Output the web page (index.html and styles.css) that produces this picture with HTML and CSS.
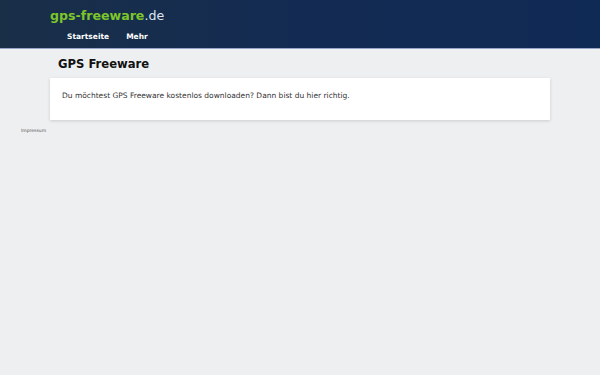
FILE: index.html
```html
<!DOCTYPE html>
<html lang="de">
<head>
    <meta charset="UTF-8">
    <meta name="viewport" content="width=device-width, initial-scale=1.0">
    <title>GPS Freeware</title>
    <link rel="stylesheet" href="styles.css">
</head>
<body>
    <header class="site-header">
        <div class="header-inner">
            <a href="/" class="logo"><span class="logo-name">gps-freeware</span>.de</a>
            <nav class="main-nav">
                <a href="/">Startseite</a>
                <a href="#">Mehr</a>
            </nav>
        </div>
    </header>

    <main class="content">
        <h1>GPS Freeware</h1>
        <div class="card">
            <p>Du möchtest GPS Freeware kostenlos downloaden? Dann bist du hier richtig.</p>
        </div>
    </main>

    <footer class="site-footer">
        <a href="#">Impressum</a>
    </footer>
</body>
</html>
```

FILE: styles.css
```css
* {
    margin: 0;
    padding: 0;
    box-sizing: border-box;
}

body {
    font-family: "DejaVu Sans", Verdana, sans-serif;
    background-color: #eeeff0;
    color: #222;
    min-height: 100vh;
}

a {
    text-decoration: none;
    color: inherit;
}

.site-header {
    background: linear-gradient(90deg, #192f48 0%, #132b52 50%, #0f2a55 100%);
    border-bottom: 1px solid #9aa3c8;
    height: 49px;
}

.header-inner {
    padding: 7px 50px 0;
}

.logo {
    display: block;
    font-size: 12.6px;
    line-height: 18px;
    color: #dfe6f0;
}

.logo-name {
    color: #7cc62a;
    font-weight: bold;
}

.main-nav {
    display: flex;
    gap: 17px;
    padding: 6px 0 0 17px;
}

.main-nav a {
    color: #ffffff;
    font-weight: bold;
    font-size: 7.5px;
    line-height: 12px;
}

.content {
    padding: 8px 50px 0;
}

.content h1 {
    font-size: 11.6px;
    line-height: 15px;
    padding-left: 8px;
    margin-bottom: 6px;
    color: #111;
}

.card {
    background: #ffffff;
    width: 500px;
    height: 42px;
    padding: 12px 12px;
    box-shadow: 0 1px 3px rgba(0, 0, 0, 0.15);
}

.card p {
    font-size: 7.5px;
    line-height: 12px;
    color: #333;
}

.site-footer {
    padding: 8px 21px;
    font-size: 4.5px;
    color: #555;
}
```
